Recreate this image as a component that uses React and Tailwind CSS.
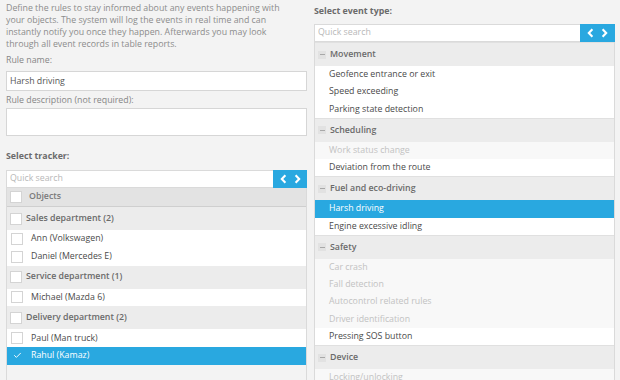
import { Check } from "lucide-react";

const trackerRows = [
  { type: "group", label: "Sales department (2)" },
  { type: "item", label: "Ann (Volkswagen)" },
  { type: "item", label: "Daniel (Mercedes E)" },
  { type: "group", label: "Service department (1)" },
  { type: "item", label: "Michael (Mazda 6)" },
  { type: "group", label: "Delivery department (2)" },
  { type: "item", label: "Paul (Man truck)" },
  { type: "item", label: "Rahul (Kamaz)", selected: true },
];

const eventGroups = [
  {
    title: "Movement",
    items: [
      { label: "Geofence entrance or exit" },
      { label: "Speed exceeding" },
      { label: "Parking state detection" },
    ],
  },
  {
    title: "Scheduling",
    items: [
      { label: "Work status change", disabled: true },
      { label: "Deviation from the route" },
    ],
  },
  {
    title: "Fuel and eco-driving",
    items: [
      { label: "Harsh driving", selected: true },
      { label: "Engine excessive idling" },
    ],
  },
  {
    title: "Safety",
    items: [
      { label: "Car crash", disabled: true },
      { label: "Fall detection", disabled: true },
      { label: "Autocontrol related rules", disabled: true },
      { label: "Driver identification", disabled: true },
      { label: "Pressing SOS button" },
    ],
  },
  {
    title: "Device",
    items: [{ label: "Locking/unlocking", disabled: true }],
  },
];

// Search field with the blue arrow buttons
const SearchBox = ({ btnWidth }) => (
  <div className="flex h-[18px] border border-[#dadada] bg-white">
    <input
      placeholder="Quick search"
      className="flex-1 min-w-0 px-[3px] text-[8.8px] text-[#444] placeholder:text-[#b8b8b8] outline-none bg-transparent"
    />
    <div
      className={`flex items-center justify-center gap-[7px] bg-[#29a8e0] -my-px -mr-px ${btnWidth}`}
    >
      <svg width="7" height="10" viewBox="0 0 7 10">
        <path d="M5.4 1.2 1.8 5l3.6 3.8" fill="none" stroke="#fff" strokeWidth="2.1" />
      </svg>
      <svg width="7" height="10" viewBox="0 0 7 10">
        <path d="M1.6 1.2 5.2 5 1.6 8.8" fill="none" stroke="#fff" strokeWidth="2.1" />
      </svg>
    </div>
  </div>
);

const Checkbox = () => (
  <span className="w-[12px] h-[12px] shrink-0 bg-white border border-[#d4d4d4]" />
);

export default function App() {
  return (
    <div className="flex gap-[7px] pl-[6px] h-[380px] overflow-hidden bg-[#f3f3f3] font-['Open_Sans',sans-serif] text-[8.8px]">
      {/* Left column */}
      <div className="w-[301px] flex flex-col">
        <p className="max-w-[288px] pt-[2px] leading-[12px] text-[#8c8c8c]">
          Define the rules to stay informed about any events happening with
          your objects. The system will log the events in real time and can
          instantly notify you once they happen. Afterwards you may look
          through all event records in table reports.
        </p>
        <label className="mt-[4px] leading-[12px] text-[#868686]">Rule name:</label>
        <input
          defaultValue="Harsh driving"
          className="mt-[5px] h-[20px] px-[3px] bg-white border border-[#d6d6d6] text-[#555] outline-none"
        />
        <label className="mt-[3px] leading-[12px] text-[#868686]">
          Rule description (not required):
        </label>
        <textarea className="mt-[2px] h-[28px] bg-white border border-[#d6d6d6] resize-none outline-none" />

        <h3 className="mt-[14px] leading-[12px] font-bold text-[#6b6b6b]">Select tracker:</h3>
        <div className="mt-[8px]">
          <SearchBox btnWidth="w-[34px]" />
        </div>
        <div className="flex-1 border-x border-[#dadada]">
          <div className="flex items-center gap-[7px] h-[19px] pl-[3px] bg-[#e3e3e3] border-b border-[#cfcfcf] text-[#7a7a7a] font-semibold">
            <Checkbox />
            <span>Objects</span>
          </div>
          {trackerRows.map((row) =>
            row.type === "group" ? (
              <div
                key={row.label}
                className="flex items-center gap-[4px] h-[23px] pl-[3px] bg-[#ececec] text-[#6a6a6a] font-semibold"
              >
                <Checkbox />
                <span>{row.label}</span>
              </div>
            ) : (
              <div
                key={row.label}
                className={`flex items-center gap-[8px] h-[17.75px] pl-[4px] ${
                  row.selected ? "bg-[#29a8e0] text-white" : "bg-white text-[#4a4a4a]"
                }`}
              >
                {row.selected ? (
                  <span className="w-[12px] h-[12px] flex items-center justify-center">
                    <Check size={9} strokeWidth={2.5} />
                  </span>
                ) : (
                  <Checkbox />
                )}
                <span>{row.label}</span>
              </div>
            )
          )}
        </div>
      </div>

      {/* Right column */}
      <div className="w-[301px] flex flex-col">
        <h3 className="pt-[5px] leading-[12px] font-bold text-[#6b6b6b]">Select event type:</h3>
        <div className="mt-[7px]">
          <SearchBox btnWidth="w-[35px]" />
        </div>
        <div className="flex-1 border-x border-[#dadada]">
          {eventGroups.map((g) => (
            <div key={g.title}>
              <div className="flex items-center gap-[4px] h-[24px] pl-[3px] bg-[#ececec] border-t border-[#e0e0e0] text-[#6a6a6a] font-semibold">
                <span className="w-[8px] h-[8px] flex items-center justify-center bg-[#e2e2e2]">
                  <span className="w-[5px] h-px bg-[#a8a8a8]" />
                </span>
                <span>{g.title}</span>
              </div>
              {g.items.map((it) => (
                <div
                  key={it.label}
                  className={`flex items-center h-[17.25px] pl-[14px] ${
                    it.selected
                      ? "bg-[#29a8e0] text-white"
                      : it.disabled
                      ? "bg-[#f8f8f8] text-[#c2c2c2]"
                      : "bg-white text-[#4a4a4a]"
                  }`}
                >
                  {it.label}
                </div>
              ))}
            </div>
          ))}
        </div>
      </div>
    </div>
  );
}
